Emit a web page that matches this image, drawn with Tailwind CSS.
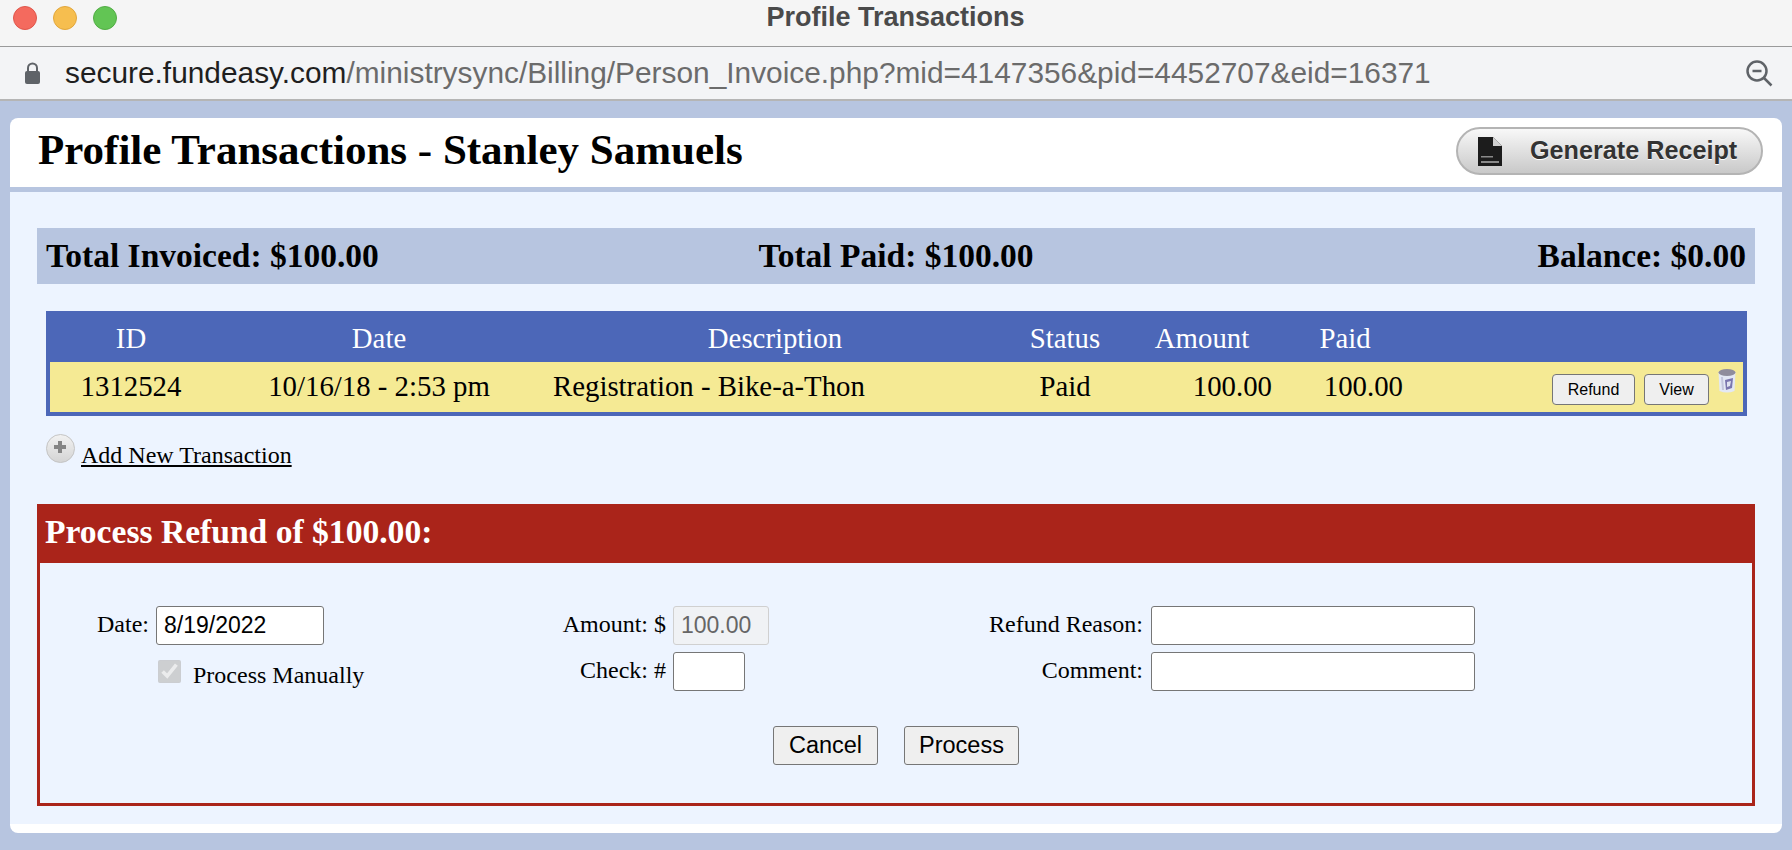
<!DOCTYPE html>
<html lang="en">
<head>
  <meta charset="UTF-8" />
  <title>Profile Transactions</title>
  <script src="https://cdn.jsdelivr.net/npm/@tailwindcss/browser@4"></script>
</head>
<body class="bg-[#b7c5e0] h-[850px] overflow-hidden font-['Liberation_Serif',serif] text-black">
  <!-- window title bar -->
  <div class="h-[47px] pb-[11px] bg-[#f5f5f5] border-b border-[#9a9a9a] flex items-center relative font-['Liberation_Sans',sans-serif]">
    <div class="flex gap-[16px] pl-[13px]">
      <span class="w-[24px] h-[24px] rounded-full bg-[#f46a5e] border border-[#e0564b]"></span>
      <span class="w-[24px] h-[24px] rounded-full bg-[#f6be4f] border border-[#e2a73c]"></span>
      <span class="w-[24px] h-[24px] rounded-full bg-[#62c554] border border-[#52ad45]"></span>
    </div>
    <div class="flex-1 text-center font-bold text-[27px] text-[#4a4a4a] pr-[118px]">Profile Transactions</div>
  </div>
  <!-- address bar -->
  <div class="h-[54px] bg-[#f3f4f6] border-b-[2px] border-[#b5b5b5] flex items-center pl-[24px] pr-[19px] font-['Liberation_Sans',sans-serif]">
    <svg class="w-[17px] h-[22px] shrink-0" viewBox="0 0 17 22">
      <path d="M4 9V6a4.500 4.500 0 0 1 9 0v3" fill="none" stroke="#5f6368" stroke-width="2"/>
      <rect x="1" y="9" width="15" height="13" rx="2" fill="#5f6368"/>
    </svg>
    <div class="ml-[24px] flex-1 text-[29.850px] text-[#6b6b6b] whitespace-nowrap pt-[1px]"><span class="text-[#1f1f1f]">secure.fundeasy.com</span>/ministrysync/Billing/Person_Invoice.php?mid=4147356&amp;pid=4452707&amp;eid=16371</div>
    <svg class="w-[27px] h-[27px] shrink-0" viewBox="0 0 27 27" fill="none" stroke="#5f6368" stroke-width="2.500">
      <circle cx="11" cy="11" r="9.500"/>
      <path d="M6.500 11h9M18 18l7.500 7.500"/>
    </svg>
  </div>

  <!-- card -->
  <div class="mx-[10px] mt-[17px] bg-white rounded-[8px] pb-[9px]">
    <div class="h-[69px] flex items-center justify-between pl-[28px] pr-[19px]">
      <h1 class="text-[43px] font-bold leading-none -mt-[7px]">Profile Transactions - Stanley Samuels</h1>
      <button class="-mt-[3px] w-[307px] h-[48px] rounded-full border-2 border-[#b4b4b4] bg-gradient-to-b from-[#f8f8f8] to-[#c9c9c9] flex items-center pl-[20px] font-['Liberation_Sans',sans-serif]">
        <svg class="w-[24px] h-[29px] shrink-0" viewBox="0 0 24 29">
          <path d="M0 0h15l9 9v20H0z" fill="#1c1c1c"/>
          <path d="M15 0l9 9h-9z" fill="#d0d0d0"/>
          <path d="M3 19h12v1.500H3zM3 24h18v2H3z" fill="#8a8a8a"/>
        </svg>
        <span class="ml-[28px] font-bold text-[25.200px] text-[#333] [text-shadow:0_1px_0_#fff]">Generate Receipt</span>
      </button>
    </div>
    <div class="border-t-[5px] border-[#b7c5e0] bg-[#edf4ff] h-[637px] pt-[36px] px-[27px]">
      <!-- totals -->
      <div class="h-[56px] bg-[#b7c5e0] grid grid-cols-3 items-center px-[9px] text-[33.500px] font-bold w-[1718px] whitespace-nowrap">
        <span>Total Invoiced: $100.00</span>
        <span class="text-center">Total Paid: $100.00</span>
        <span class="text-right">Balance: $0.00</span>
      </div>

      <!-- transactions -->
      <table class="ml-[9px] mt-[27px] w-[1701px] table-fixed border-collapse border-[4px] border-t-0 border-[#4c67b8] text-[28.800px]">
        <colgroup>
          <col class="w-[164px]" /><col class="w-[334px]" /><col class="w-[458px]" /><col class="w-[122px]" /><col class="w-[152px]" /><col class="w-[134px]" /><col />
        </colgroup>
        <thead>
          <tr class="h-[51px] bg-[#4c67b8] text-white">
            <th class="font-normal pt-[4px]">ID</th>
            <th class="font-normal pt-[4px]">Date</th>
            <th class="font-normal pt-[4px]">Description</th>
            <th class="font-normal pt-[4px]">Status</th>
            <th class="font-normal pt-[4px]">Amount</th>
            <th class="font-normal pt-[4px]">Paid</th>
            <th></th>
          </tr>
        </thead>
        <tbody>
          <tr class="h-[52px] bg-[#f5ea94]">
            <td class="text-center">1312524</td>
            <td class="text-center whitespace-nowrap">10/16/18 - 2:53 pm</td>
            <td class="pl-[7px] whitespace-nowrap">Registration - Bike-a-Thon</td>
            <td class="text-center">Paid</td>
            <td class="text-right pr-[6px]">100.00</td>
            <td class="text-right pr-[9px]">100.00</td>
            <td>
              <div class="flex justify-end items-start gap-[9px] pr-[7px] font-['Liberation_Sans',sans-serif]">
                <button class="mt-[5px] w-[83px] h-[31px] bg-[#efefef] border border-[#767676] rounded-[4px] text-[16px]">Refund</button>
                <button class="mt-[5px] w-[65px] h-[31px] bg-[#efefef] border border-[#767676] rounded-[4px] text-[16px]">View</button>
                <svg class="w-[18px] h-[24px]" viewBox="0 0 18 24">
                  <path d="M0.500 3h17l-1 19q-7.500 3-15 0z" fill="#e3e8f4"/>
                  <ellipse cx="9" cy="3.500" rx="8.500" ry="3.500" fill="#8f8d9c"/>
                  <path d="M4 8l1 13" stroke="#c3c6dc" stroke-width="2"/>
                  <path d="M7 11l8-2-1 10-6 2z" fill="#7a76ae"/>
                  <path d="M9 13l4-1-1 5-3 1z" fill="#dfe2f0"/>
                </svg>
              </div>
            </td>
          </tr>
        </tbody>
      </table>

      <!-- add transaction -->
      <div class="ml-[9px] mt-[18px] flex items-start h-[40px]">
        <svg class="w-[29px] h-[29px] shrink-0" viewBox="0 0 29 29">
          <defs><linearGradient id="plusBg" x1="0" y1="0" x2="0" y2="1"><stop offset="0" stop-color="#f2f2f2"/><stop offset="1" stop-color="#d4d4d4"/></linearGradient></defs>
          <circle cx="14.500" cy="14.500" r="14" fill="url(#plusBg)" stroke="#c4c4c4"/>
          <path d="M14 7v12M8 13h12" stroke="#858585" stroke-width="4"/>
        </svg>
        <a href="#" class="ml-[6px] mt-[3px] text-[24px] underline">Add New Transaction</a>
      </div>

      <!-- refund panel -->
      <div class="mt-[30px] w-[1718px] h-[302px] border-[3px] border-t-0 border-[#aa241a]">
        <div class="h-[59px] pb-[2px] -mx-[3px] bg-[#aa241a] text-white font-bold text-[33.600px] flex items-center px-[8px]">Process Refund of $100.00:</div>
        <div class="mt-[43px] grid grid-cols-[109px_208px_309px_103px_374px_1fr] grid-rows-[39px_39px] gap-y-[7px] items-center text-[24px]">
          <label class="text-right pb-[3px]">Date:</label>
          <input value="8/19/2022" class="ml-[7px] w-[168px] h-[39px] bg-white border border-[#767676] rounded-[3px] px-[7px] text-[23px] font-['Liberation_Sans',sans-serif]" />
          <label class="text-right pb-[3px]">Amount: $</label>
          <input disabled value="100.00" class="ml-[7px] w-[96px] h-[39px] bg-[#f0f2f5] border border-[#d0d0d0] rounded-[3px] px-[7px] text-[#666] text-[23px] font-['Liberation_Sans',sans-serif]" />
          <label class="text-right pb-[3px]">Refund Reason:</label>
          <input class="ml-[8px] w-[324px] h-[39px] bg-white border border-[#767676] rounded-[3px]" />

          <span></span>
          <label class="flex items-center ml-[9px]">
            <input type="checkbox" checked disabled class="w-[23px] h-[23px] m-0 shrink-0" />
            <span class="ml-[12px] mt-[6px] whitespace-nowrap">Process Manually</span>
          </label>
          <label class="text-right pb-[3px]">Check: #</label>
          <input class="ml-[7px] w-[72px] h-[39px] bg-white border border-[#767676] rounded-[3px]" />
          <label class="text-right pb-[3px]">Comment:</label>
          <input class="ml-[8px] w-[324px] h-[39px] bg-white border border-[#767676] rounded-[3px]" />
        </div>
        <div class="mt-[35px] flex justify-center gap-[26px] font-['Liberation_Sans',sans-serif] text-[23.500px]">
          <button class="w-[105px] h-[39px] bg-[#efefef] border border-[#767676] rounded-[3px]">Cancel</button>
          <button class="w-[115px] h-[39px] bg-[#efefef] border border-[#767676] rounded-[3px]">Process</button>
        </div>
      </div>
    </div>
  </div>
</body>
</html>
